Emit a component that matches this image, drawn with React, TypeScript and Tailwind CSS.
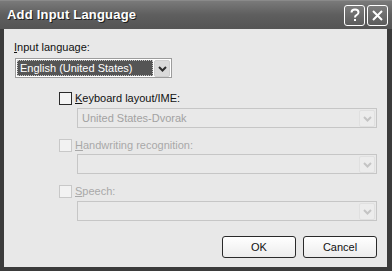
import React from "react";

const font = { fontFamily: '"Liberation Sans", Arial, sans-serif' };

function Chevron({ disabled }: { disabled?: boolean }) {
  return (
    <svg width="9" height="6" viewBox="0 0 9 6">
      <path d="M1 1 L4.5 4.5 L8 1" fill="none" stroke={disabled ? "#c4c4c4" : "#2e2e2e"} strokeWidth="2" />
    </svg>
  );
}

function DropBtn({ disabled }: { disabled?: boolean }) {
  return (
    <div
      className={`w-[16px] h-[17px] mt-[1px] mr-[1px] rounded-[2px] flex items-center justify-center ${
        disabled ? "bg-[#ececec] border border-[#e0e0e0]" : "bg-[#dadada] border border-[#cfcfcf]"
      }`}
    >
      <Chevron disabled={disabled} />
    </div>
  );
}

function CheckRow({ ul, rest, disabled }: { ul: string; rest: string; disabled?: boolean }) {
  return (
    <div className="flex items-center ml-[45px] h-[13px]">
      <div
        className={`w-[13px] h-[13px] border ${disabled ? "border-[#c8c8c8] bg-[#f2f2f2]" : "border-[#2a2a2a] bg-[#f4f4f4]"}`}
      />
      <span className={`ml-[3px] text-[11px] leading-[13px] ${disabled ? "text-[#a8a8a8]" : "text-[#111]"}`}>
        <u>{ul}</u>
        {rest}
      </span>
    </div>
  );
}

function DisabledCombo({ text }: { text?: string }) {
  return (
    <div className="ml-[63px] w-[300px] h-[20px] border border-[#c6c6c6] bg-[#e9e9e9] flex justify-between">
      <span className="pl-[4px] text-[11px] leading-[18px] text-[#a2a2a2]">{text}</span>
      <DropBtn disabled />
    </div>
  );
}

export default function App() {
  return (
    <div style={font} className="w-[392px] h-[271px] bg-[#3b3b3b] flex flex-col overflow-hidden">
      {/* Title bar */}
      <div className="h-[29px] shrink-0 flex items-center justify-between pl-[7px] pr-[4px] bg-gradient-to-b from-[#7a7a7a] via-[#5e5e5e] to-[#555555] border-t border-[#8a8a8a]">
        <span
          className="text-white font-bold text-[13px] tracking-[0.2px]"
          style={{ textShadow: "1px 1px 0 #1e1e1e" }}
        >
          Add Input Language
        </span>
        <div className="flex gap-[2px]">
          <div className="w-[21px] h-[21px] rounded-[3px] border border-white bg-gradient-to-b from-[#7c7c7c] to-[#5c5c5c] flex items-center justify-center">
            <svg width="12" height="14" viewBox="0 0 12 14">
              <path d="M2.5 4.5 Q2.5 1.5 6 1.5 Q9.5 1.5 9.5 4.3 Q9.5 6.2 7.5 7.2 Q6 8 6 9.5" fill="none" stroke="#fff" strokeWidth="2" />
              <rect x="5" y="11" width="2" height="2" fill="#fff" />
            </svg>
          </div>
          <div className="w-[21px] h-[21px] rounded-[3px] border border-white bg-gradient-to-b from-[#7c7c7c] to-[#5c5c5c] flex items-center justify-center">
            <svg width="13" height="13" viewBox="0 0 13 13">
              <path d="M2 2 L11 11 M11 2 L2 11" fill="none" stroke="#fff" strokeWidth="2" />
            </svg>
          </div>
        </div>
      </div>
      {/* Client */}
      <div className="flex-1 ml-[4px] mr-[5px] mb-[4px] bg-[#e8e8e8] flex flex-col pt-[12px] pl-[10px]">
        <div className="text-[11px] leading-[13px] text-[#111]">
          <u>I</u>nput language:
        </div>
        <div className="mt-[4px] ml-[1px] w-[157px] h-[20px] border border-[#9c9c9c] bg-white flex justify-between">
          <div className="m-[1px] w-[136px] bg-[#555555] border border-dotted border-[#c8c8c8] flex items-center">
            <span className="pl-[2px] text-[11px] leading-[13px] text-white">English (United States)</span>
          </div>
          <DropBtn />
        </div>
        <div className="mt-[14px]">
          <CheckRow ul="K" rest="eyboard layout/IME:" />
        </div>
        <div className="mt-[3px]">
          <DisabledCombo text="United States-Dvorak" />
        </div>
        <div className="mt-[11px]">
          <CheckRow ul="H" rest="andwriting recognition:" disabled />
        </div>
        <div className="mt-[2px]">
          <DisabledCombo />
        </div>
        <div className="mt-[11px]">
          <CheckRow ul="S" rest="peech:" disabled />
        </div>
        <div className="mt-[3px]">
          <DisabledCombo />
        </div>
        <div className="mt-[15px] flex justify-end gap-[7px] pr-[10px]">
          <button className="w-[74px] h-[22px] rounded-[3px] border border-[#2a2a2a] bg-gradient-to-b from-white to-[#ececec] text-[11px] text-[#111]">
            OK
          </button>
          <button className="w-[74px] h-[22px] rounded-[3px] border border-[#2a2a2a] bg-gradient-to-b from-white to-[#ececec] text-[11px] text-[#111]">
            Cancel
          </button>
        </div>
      </div>
    </div>
  );
}
